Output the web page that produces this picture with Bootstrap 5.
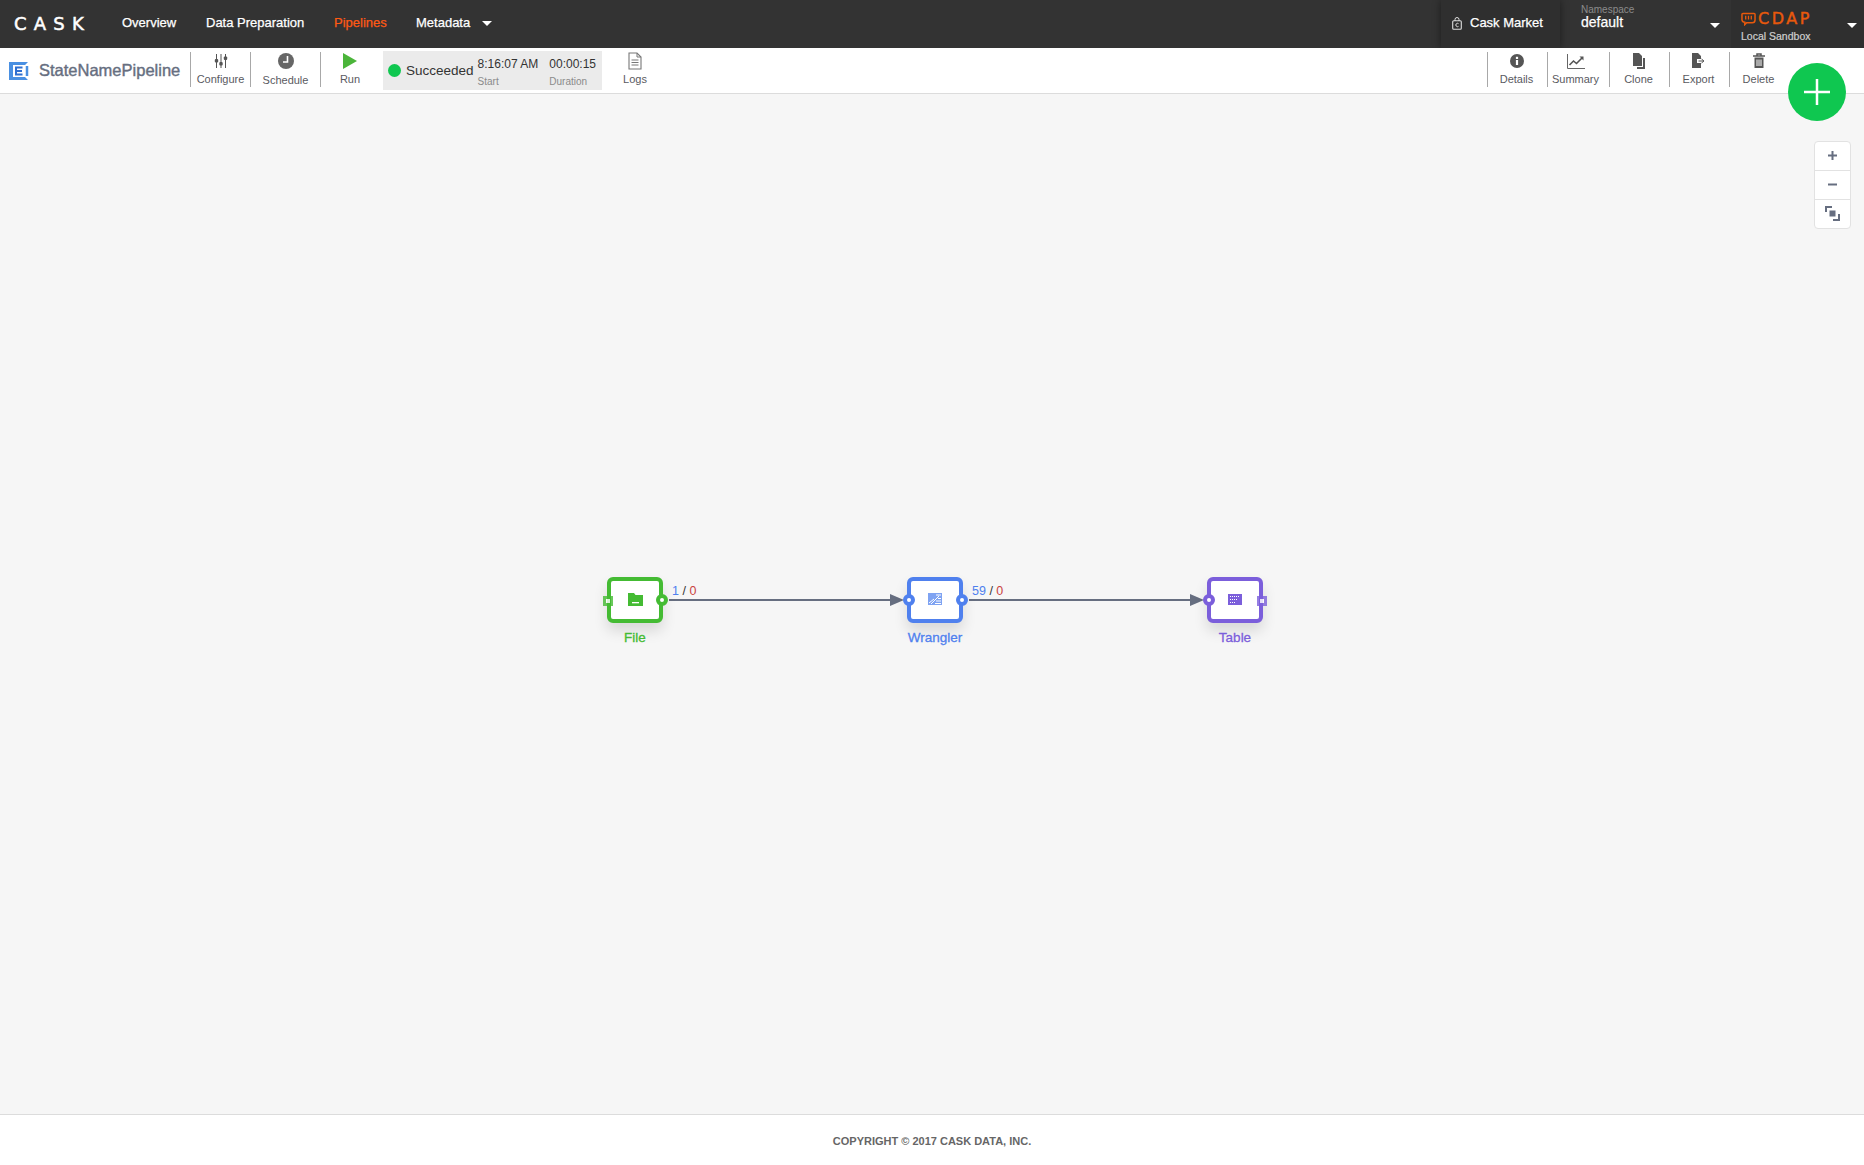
<!DOCTYPE html>
<html lang="en">
  <head>
    <meta charset="UTF-8" />
    <title>StateNamePipeline</title>
    <link href="https://cdn.jsdelivr.net/npm/bootstrap@5.3.0/dist/css/bootstrap.min.css" rel="stylesheet" />
    <style>
      html, body { height: 100%; }
      body { font-family: "Liberation Sans", Arial, sans-serif; background: #fff; overflow: hidden; }
      .page-wrap { height: 1165px; }

      /* top bar */
      .top-bar { height: 48px; background: #333; padding: 0; flex-wrap: nowrap; }
      .cask-logo { width: 122px; padding-left: 14px; color: #fff; font-size: 18px; letter-spacing: 7.2px; font-family: "DejaVu Sans", sans-serif; -webkit-text-stroke: 0.5px #fff; line-height: 48px; }
      .top-link { color: #fff; font-size: 13px; font-weight: 500; text-decoration: none; -webkit-text-stroke: 0.25px #fff; padding-bottom: 2px; }
      .top-link.now { color: #ff5a14; -webkit-text-stroke: 0.25px #ff5a14; }
      .link-overview { width: 84px; }
      .link-prep { width: 128px; }
      .link-pipes { width: 82px; }
      .caret-down { display: inline-block; width: 0; height: 0; border-left: 5px solid transparent; border-right: 5px solid transparent; border-top: 5px solid #fff; }
      .market-box { width: 119px; height: 48px; background: #2f2f2f; box-shadow: 0 0 8px rgba(0,0,0,.45); color: #fff; font-size: 13px; -webkit-text-stroke: 0.25px #fff; padding: 0 0 2px 11px; }
      .ns-box { width: 171px; height: 48px; padding: 4px 10px 0 21px; position: relative; }
      .ns-small { font-size: 10px; line-height: 11px; color: #8b8b8b; }
      .ns-value { font-size: 14px; line-height: 14px; color: #fff; -webkit-text-stroke: 0.25px #fff; }
      .ns-box .caret-down { position: absolute; right: 11px; top: 23px; }
      .cdap-box { width: 133px; height: 48px; background: #2f2f2f; padding: 9px 0 0 10px; position: relative; }
      .cdap-box .caret-down { position: absolute; right: 7px; top: 23px; }
      .cdap-head { gap: 2px; }
      .cdap-word { color: #e8590c; font-size: 16px; line-height: 19px; letter-spacing: 2.5px; font-family: "DejaVu Sans", sans-serif; -webkit-text-stroke: 0.4px #e8590c; }
      .cdap-sub { color: #d0d0d0; font-size: 10.5px; line-height: 13px; margin-top: 2px; -webkit-text-stroke: 0.2px #d0d0d0; }

      /* toolbar */
      .tool-bar { height: 46px; background: #fff; border-bottom: 1px solid #dcdcdc; position: relative; }
      .pipe-title { width: 190px; padding-left: 9px; color: #666e80; font-size: 16.5px; font-weight: 500; -webkit-text-stroke: 0.4px #666e80; white-space: nowrap; gap: 10px; }
      .tool-btn { height: 35px; border-left: 1px solid #a8a8a8; color: #5a5a5f; font-size: 11px; line-height: 12px; margin-top: 4px; align-self: flex-start; }
      .tool-btn svg { display: block; height: 18px; margin: 0 auto 3px; }
      .tool-shift { padding-right: 2px; }
      .run-btn { padding-right: 1px; }
      .no-line { border-left: 0; }
      .w-60 { width: 60px; }
      .w-58 { width: 58px; }
      .w-70 { width: 70px; }
      .w-66 { width: 66px; }
      .sched-label { display: block; padding-top: 1px; }
      .end-gap { width: 77px; }
      .status-box { width: 219px; height: 39px; background: #ebebeb; margin: 3px 0 0 3px; padding-left: 5px; color: #333; font-size: 13.5px; }
      .status-dot { width: 13px; height: 13px; border-radius: 50%; background: #0fc750; flex: 0 0 13px; }
      .status-word { margin: 1px 4px 0 5px; }
      .time-col { font-size: 12px; line-height: 14px; margin-right: 11px; padding-top: 3px; white-space: nowrap; }
      .time-col small { display: block; font-size: 10px; color: #8a8a8a; margin-top: 5px; line-height: 11px; }

      /* canvas */
      .flow-canvas { flex: 1 1 auto; background: #f6f6f6; position: relative; }
      .add-btn { position: absolute; left: 1788px; top: -31px; width: 58px; height: 58px; border-radius: 50%; background: #0fc750; z-index: 3; }
      .add-btn svg { display: block; }
      .zoom-panel { position: absolute; left: 1814px; top: 47px; width: 37px; background: #fff; border: 1px solid #e2e2e2; border-radius: 4px; }
      .zoom-row { height: 29px; color: #666e80; padding-bottom: 2px; }
      .zoom-row:first-child { height: 28px; }
      .zoom-row + .zoom-row { border-top: 1px solid #e2e2e2; }
      .edge-svg { position: absolute; left: 0; top: 0; }
      .plugin-node { position: absolute; top: 483px; width: 56px; height: 46px; background: #fff; border: 4px solid; border-radius: 6px; box-shadow: 0 8px 14px rgba(0,0,0,.12); }
      .plugin-node svg { margin-bottom: 2px; }
      .node-file { left: 607px; border-color: #44bb33; color: #44bb33; }
      .node-wrangler { left: 907px; border-color: #4f80ee; color: #4f80ee; }
      .node-table { left: 1207px; border-color: #7b5edb; color: #7b5edb; }
      .node-name { position: absolute; top: 49px; left: -22px; width: 92px; text-align: center; font-size: 13.5px; line-height: 15px; -webkit-text-stroke: 0.3px; }
      .port { position: absolute; background: #fff; border: 4px solid; width: 12px; height: 12px; top: 13px; }
      .port-round { border-radius: 50%; }
      .port-left { left: -8px; }
      .port-right { right: -9px; }
      .port-square { border-width: 3px; border-color: currentColor; opacity: .8; width: 10px; height: 10px; top: 15px; }
      .port-square.port-right { right: -8px; }
      .edge-count { position: absolute; top: 490px; font-size: 12.5px; line-height: 14px; color: #333; }
      .count-first { left: 672px; }
      .count-second { left: 972px; }
      .count-in { color: #4f80ee; }
      .count-err { color: #c9423f; }

      /* footer */
      .foot-bar { height: 51px; background: #fff; border-top: 1px solid #dcdcdc; color: #666; font-size: 11px; font-weight: 700; padding-top: 19px; line-height: 14px; }
    </style>
  </head>
  <body>
    <div class="page-wrap d-flex flex-column">
      <nav class="navbar top-bar d-flex align-items-center">
        <div class="cask-logo">CASK</div>
        <a class="top-link link-overview" href="#">Overview</a>
        <a class="top-link link-prep" href="#">Data Preparation</a>
        <a class="top-link now link-pipes" href="#">Pipelines</a>
        <a class="top-link" href="#">Metadata <span class="caret-down ms-2 align-middle"></span></a>
        <div class="ms-auto d-flex">
          <div class="market-box d-flex align-items-center gap-2">
            <svg width="10" height="13" viewBox="0 0 10 13"><path d="M3 4V2.500a2 2 0 0 1 4 0V4" fill="none" stroke="#ddd" stroke-width="1"/><rect x=".7" y="3.700" width="8.600" height="8.600" rx="1" fill="none" stroke="#ddd" stroke-width="1.100"/><path d="M6.500 6.600a1.700 1.700 0 1 0 0 2.800" fill="none" stroke="#ddd"/></svg>
            <span>Cask Market</span>
          </div>
          <div class="ns-box">
            <div class="ns-small">Namespace</div>
            <div class="ns-value">default</div>
            <span class="caret-down"></span>
          </div>
          <div class="cdap-box">
            <div class="cdap-head d-flex align-items-center">
              <svg width="15" height="14" viewBox="0 0 16 15"><path d="M2 1.500h12a1 1 0 0 1 1 1v6a3 3 0 0 1-3 3H6l-2 2v-2.500A3 3 0 0 1 1 8.500v-6a1 1 0 0 1 1-1z" fill="none" stroke="#e8590c" stroke-width="1.600"/><path d="M5 4v4M8 4v4M11 4v4" stroke="#e8590c" stroke-width="1.400"/></svg>
              <span class="cdap-word">CDAP</span>
            </div>
            <div class="cdap-sub">Local Sandbox</div>
            <span class="caret-down"></span>
          </div>
        </div>
      </nav>

      <div class="tool-bar d-flex">
        <div class="pipe-title d-flex align-items-center">
          <svg width="20" height="20" viewBox="0 0 20 20"><path d="M1 1h18l-3 3H4v12h12l3 3H1z" fill="#4a90e2"/><path d="M1 1v18" stroke="#4a90e2" stroke-width="2"/><path d="M18 5v10" stroke="#4a90e2" stroke-width="2.500"/><path d="M13.500 6.500H7v7h6.500M7 10h6" fill="none" stroke="#2f6fd0" stroke-width="2"/></svg>
          <span>StateNamePipeline</span>
        </div>
        <div class="tool-btn w-60 text-center">
          <svg width="14" height="18" viewBox="0 0 14 18"><path d="M2.500 2v14M7 2v14M11.500 2v14" stroke="#555" stroke-width="1"/><rect x=".8" y="7" width="3.400" height="3.400" rx="1" fill="#555"/><rect x="5.300" y="10" width="3.400" height="3.400" rx="1" fill="#555"/><rect x="9.800" y="4.500" width="3.400" height="3.400" rx="1" fill="#555"/></svg>
          Configure
        </div>
        <div class="tool-btn w-70 text-center">
          <svg width="16" height="18" viewBox="0 0 16 18"><circle cx="8" cy="9" r="8" fill="#666"/><path d="M9.500 4v6H5" fill="none" stroke="#fff" stroke-width="1.600"/></svg>
          <span class="sched-label">Schedule</span>
        </div>
        <div class="tool-btn run-btn w-60 text-center">
          <svg width="16" height="18" viewBox="0 0 16 18"><path d="M1 1l14 8-14 8z" fill="#4bb53a"/></svg>
          Run
        </div>
        <div class="status-box d-flex align-items-center">
          <span class="status-dot"></span>
          <span class="status-word">Succeeded</span>
          <div class="time-col">8:16:07 AM<small>Start</small></div>
          <div class="time-col">00:00:15<small>Duration</small></div>
        </div>
        <div class="tool-btn no-line w-66 text-center">
          <svg width="14" height="18" viewBox="0 0 14 18"><path d="M1 1h8l4 4v12H1z" fill="none" stroke="#777" stroke-width="1.100"/><path d="M9 1v4h4M3.500 8h7M3.500 10.500h7M3.500 13h7" fill="none" stroke="#777"/></svg>
          Logs
        </div>
        <div class="ms-auto d-flex">
          <div class="tool-btn tool-shift w-60 text-center">
            <svg width="16" height="18" viewBox="0 0 16 18"><circle cx="8" cy="9" r="7" fill="#555"/><rect x="6.900" y="8" width="2.200" height="5" fill="#fff"/><rect x="6.900" y="4.800" width="2.200" height="2.200" fill="#fff"/></svg>
            Details
          </div>
          <div class="tool-btn tool-shift w-58 text-center">
            <svg width="18" height="18" viewBox="0 0 18 18"><path d="M.5 2v14.500H18" fill="none" stroke="#666"/><path d="M2.500 13l4-4 3 2.500 6-6" fill="none" stroke="#555" stroke-width="1.600"/><path d="M12.500 4.500h4v4z" fill="#555"/></svg>
            Summary
          </div>
          <div class="tool-btn tool-shift w-60 text-center ms-1">
            <svg width="14" height="18" viewBox="0 0 14 18"><path d="M1 1h6l3 3v10H1z" fill="#555"/><path d="M11 6h2v11H5v-2h6z" fill="#555"/></svg>
            Clone
          </div>
          <div class="tool-btn tool-shift w-60 text-center">
            <svg width="15" height="18" viewBox="0 0 15 18"><path d="M1 1h6l3 3v3H6v4h4v5H1z" fill="#555"/><path d="M7.500 9h4.500M10.500 7l2.500 2-2.500 2" fill="none" stroke="#555"/></svg>
            Export
          </div>
          <div class="tool-btn w-58 text-center">
            <svg width="14" height="18" viewBox="0 0 14 18"><path d="M1 4h12M5 4V2h4v2" fill="none" stroke="#555" stroke-width="1.500"/><path d="M2.500 5.500h9V16h-9z" fill="#555"/><path d="M5 7.500V14M7 7.500V14M9 7.500V14" stroke="#fff"/></svg>
            Delete
          </div>
          <div class="end-gap"></div>
        </div>
      </div>

      <div class="flow-canvas">
        <div class="add-btn">
          <svg width="58" height="58" viewBox="0 0 58 58"><path d="M29 16v26M16 29h26" stroke="#fff" stroke-width="2.500"/></svg>
        </div>
        <div class="zoom-panel">
          <div class="zoom-row d-flex align-items-center justify-content-center"><svg width="11" height="11" viewBox="0 0 11 11"><path d="M5.500 1v9M1 5.500h9" stroke="#666e80" stroke-width="2"/></svg></div>
          <div class="zoom-row d-flex align-items-center justify-content-center"><svg width="11" height="11" viewBox="0 0 11 11"><path d="M1 5.500h9" stroke="#666e80" stroke-width="2"/></svg></div>
          <div class="zoom-row d-flex align-items-center justify-content-center"><svg width="15" height="15" viewBox="0 0 15 15"><path d="M1 6V1h6M14 8v6H8" fill="none" stroke="#666e80" stroke-width="2"/><rect x="4.500" y="4.500" width="6" height="6" fill="#666e80"/></svg></div>
        </div>

        <svg class="edge-svg" width="1864" height="1020">
          <path d="M669 506H892M969 506H1192" stroke="#666e80" stroke-width="2" fill="none"/>
          <path d="M890 500l14 6-14 6zM1190 500l14 6-14 6z" fill="#666e80"/>
        </svg>

        <div class="edge-count count-first"><span class="count-in">1</span> / <span class="count-err">0</span></div>
        <div class="edge-count count-second"><span class="count-in">59</span> / <span class="count-err">0</span></div>

        <div class="plugin-node node-file d-flex align-items-center justify-content-center">
          <span class="port port-square port-left"></span>
          <svg width="15" height="13" viewBox="0 0 15 13"><path d="M0 0h6l1.500 2H15v11H0z" fill="#44bb33"/><rect x="4" y="9" width="7" height="1.300" fill="#fff"/></svg>
          <span class="port port-round port-right"></span>
          <div class="node-name">File</div>
        </div>
        <div class="plugin-node node-wrangler d-flex align-items-center justify-content-center">
          <span class="port port-round port-left"></span>
          <svg width="14" height="12" viewBox="0 0 14 12"><rect width="14" height="12" fill="#7fa3f2"/><path d="M1 10l5-4M3 11l8-8M8 2h5M10 5.500h3M8 8h5M7 10.500h6" stroke="#fff" stroke-width="1"/></svg>
          <span class="port port-round port-right"></span>
          <div class="node-name">Wrangler</div>
        </div>
        <div class="plugin-node node-table d-flex align-items-center justify-content-center">
          <span class="port port-round port-left"></span>
          <svg width="14" height="11" viewBox="0 0 14 11"><rect width="14" height="11" fill="#7b5edb"/><path d="M2 2.500h10M2 5.500h8M2 8.500h6" stroke="#fff" stroke-width="1" stroke-dasharray="1 1"/></svg>
          <span class="port port-square port-right"></span>
          <div class="node-name">Table</div>
        </div>
      </div>

      <footer class="foot-bar text-center">COPYRIGHT © 2017 CASK DATA, INC.</footer>
    </div>
    <script src="https://cdn.jsdelivr.net/npm/bootstrap@5.3.0/dist/js/bootstrap.bundle.min.js"></script>
  </body>
</html>
